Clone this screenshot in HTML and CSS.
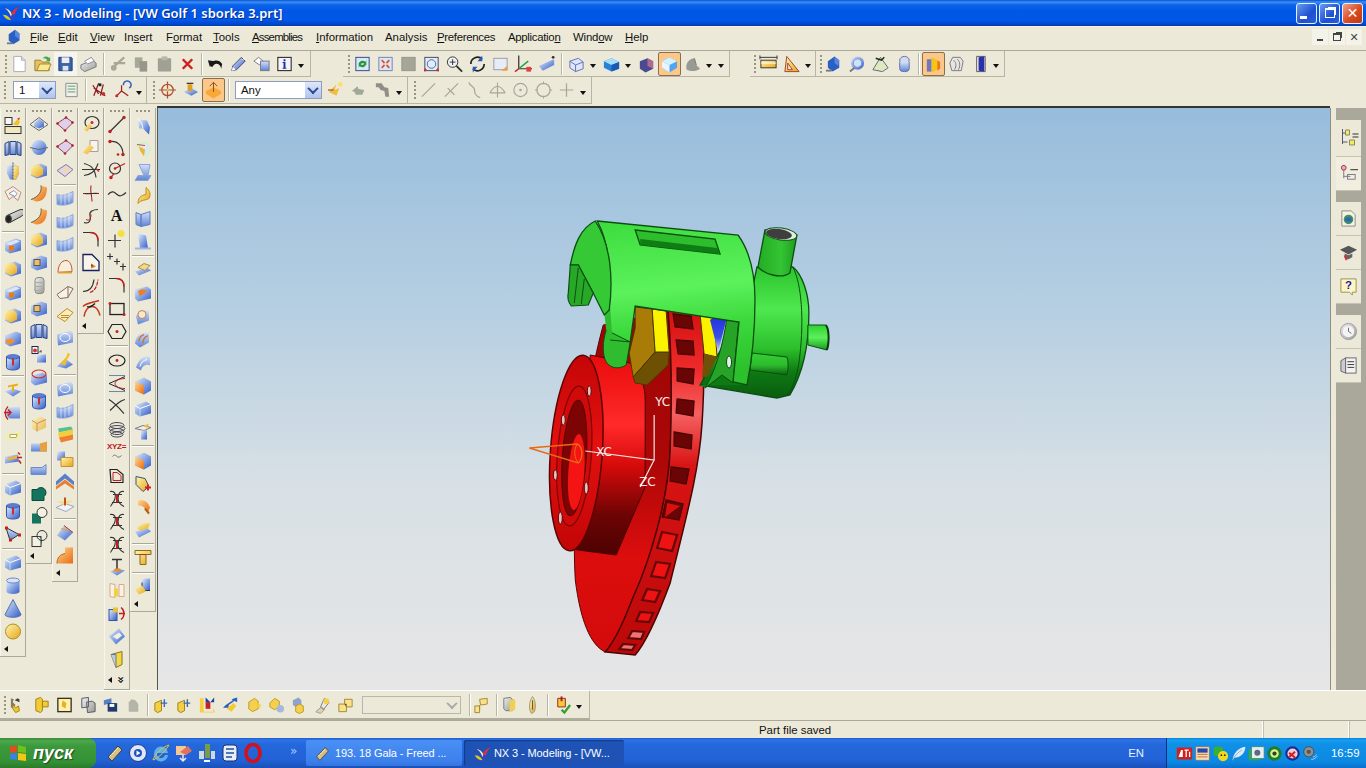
FILE: index.html
```html
<!DOCTYPE html>
<html lang="en">
<head>
<meta charset="utf-8">
<title>NX 3 - Modeling</title>
<link rel="stylesheet" href="styles.css">
</head>
<body>
<svg class="defs" aria-hidden="true">
<defs>
<linearGradient id="gb" x1="0" y1="0" x2="1" y2="1"><stop offset="0" stop-color="#e4eefc"/><stop offset="1" stop-color="#2f5cc8"/></linearGradient>
<linearGradient id="gy" x1="0" y1="0" x2="1" y2="1"><stop offset="0" stop-color="#fff6b0"/><stop offset="1" stop-color="#e8a418"/></linearGradient>
<linearGradient id="go" x1="0" y1="0" x2="1" y2="1"><stop offset="0" stop-color="#ffd890"/><stop offset="1" stop-color="#e86a10"/></linearGradient>
<linearGradient id="gg" x1="0" y1="0" x2="1" y2="1"><stop offset="0" stop-color="#f0f0f0"/><stop offset="1" stop-color="#9a9a92"/></linearGradient>
<linearGradient id="gt" x1="0" y1="0" x2="0" y2="1"><stop offset="0" stop-color="#d5e0f6"/><stop offset="1" stop-color="#5d83d6"/></linearGradient>
<linearGradient id="gbody" x1="0" y1="0" x2="0.1" y2="1"><stop offset="0" stop-color="#3cdc3c"/><stop offset=".45" stop-color="#5cf25c"/><stop offset=".7" stop-color="#3bd83b"/><stop offset="1" stop-color="#2cc02c"/></linearGradient>
<linearGradient id="grear" x1="0" y1="0" x2="0" y2="1"><stop offset="0" stop-color="#2cc42c"/><stop offset=".32" stop-color="#4fe84f"/><stop offset=".62" stop-color="#2cc02c"/><stop offset=".8" stop-color="#0e7a12"/><stop offset="1" stop-color="#0a5c10"/></linearGradient>
<linearGradient id="gbump" x1="0" y1="0" x2="0" y2="1"><stop offset="0" stop-color="#35d035"/><stop offset=".55" stop-color="#2dbb2d"/><stop offset="1" stop-color="#0b5f10"/></linearGradient>
<linearGradient id="gtube" x1="0" y1="0" x2="1" y2="0"><stop offset="0" stop-color="#24ac24"/><stop offset=".6" stop-color="#33c433"/><stop offset="1" stop-color="#1f9c1f"/></linearGradient>
<linearGradient id="gstem" x1="0" y1="0" x2="0" y2="1"><stop offset="0" stop-color="#2fd02f"/><stop offset=".5" stop-color="#5cf05c"/><stop offset="1" stop-color="#169a1c"/></linearGradient>
<linearGradient id="grim" x1="0" y1="0" x2="0" y2="1"><stop offset="0" stop-color="#d41010"/><stop offset=".17" stop-color="#ee2a2a"/><stop offset=".3" stop-color="#f56060"/><stop offset=".45" stop-color="#d81414"/><stop offset="1" stop-color="#bb0808"/></linearGradient>
<linearGradient id="gface" x1="0" y1="0" x2="0" y2="1"><stop offset="0" stop-color="#9c0505"/><stop offset=".45" stop-color="#ad0707"/><stop offset=".72" stop-color="#dc0d0d"/><stop offset="1" stop-color="#d40b0b"/></linearGradient>
<linearGradient id="ghub" x1="0" y1="0" x2="0" y2="1"><stop offset="0" stop-color="#e90b0b"/><stop offset=".35" stop-color="#ff2a2a"/><stop offset=".55" stop-color="#d80a0a"/><stop offset=".8" stop-color="#6d0404"/><stop offset="1" stop-color="#4d0202"/></linearGradient>
<linearGradient id="gflange" x1="0" y1="0" x2="0" y2="1"><stop offset="0" stop-color="#c40606"/><stop offset=".45" stop-color="#e41010"/><stop offset="1" stop-color="#c20606"/></linearGradient>
<linearGradient id="gpad" x1="0" y1="0" x2="0" y2="1"><stop offset="0" stop-color="#2230e0"/><stop offset=".6" stop-color="#3a50e8"/><stop offset="1" stop-color="#d8e0f0"/></linearGradient>
<symbol id="sk" viewBox="0 0 20 20"><rect x="2" y="2" width="7" height="7" fill="#f8f8f4" stroke="#333"/><rect x="2" y="11" width="16" height="7" fill="#efe8c0" stroke="#333"/><path d="M10 9l4-5 3 2-2 4z" fill="#f2c020"/><path d="M14 3l3-1-1 3z" fill="#d84020"/></symbol>
<symbol id="bk" viewBox="0 0 20 20"><path d="M2 5l4-2v13l-4 1zM7 3h6v13H7zM14 3l4 2v12l-4-1z" fill="url(#gt)" stroke="#2a3f80"/></symbol>
<symbol id="rv" viewBox="0 0 20 20"><path d="M4 5l6-2 6 2v7l-3 6H7L4 12z" fill="url(#gb)"/><path d="M10 4l6 1v7l-3 6h-3z" fill="url(#gy)"/><path d="M10 1v17" stroke="#555" stroke-dasharray="2 1"/></symbol>
<symbol id="sw" viewBox="0 0 20 20"><path d="M2 7l8-5 8 6-3 8-5-4-4 3z" fill="#f6efe0" stroke="#c08a80"/><path d="M6 9l5-3 3 3-2 3z" fill="#fff" stroke="#8090c0"/></symbol>
<symbol id="tb" viewBox="0 0 20 20"><path d="M4 8l11-5a3 5 60 0 1 3 6L7 15z" fill="url(#gg)" stroke="#333"/><ellipse cx="5.5" cy="11.5" rx="3" ry="4" fill="#222" stroke="#555"/></symbol>
<symbol id="bo" viewBox="0 0 20 20"><path d="M2 7l11-4 5 2v10l-11 3-5-3z" fill="url(#gb)"/><path d="M3 8l10-4 4 2-10 4z" fill="#d8e6fb"/><path d="M6 10h5v5H6z" fill="#e87c18"/></symbol>
<symbol id="by" viewBox="0 0 20 20"><path d="M2 6l10-3 6 3v9l-10 3-6-3z" fill="url(#gb)"/><path d="M2 6l8-2 4 4v6l-6 3-6-3z" fill="url(#gy)"/></symbol>
<symbol id="bp" viewBox="0 0 20 20"><path d="M2 7l11-4 5 2v10l-11 3-5-3z" fill="url(#gb)"/><path d="M3 11l6-1 3 3-5 3-4-2z" fill="#f09030"/></symbol>
<symbol id="cy" viewBox="0 0 20 20"><ellipse cx="10" cy="5" rx="6.5" ry="2.5" fill="#5b7dd2"/><path d="M3.500 5v11a6.500 2.500 0 0 0 13 0V5a6.500 2.500 0 0 1-13 0" fill="url(#gb)" stroke="#35a"/><path d="M9 7h2v7H9z" fill="#c83030"/></symbol>
<symbol id="ty" viewBox="0 0 20 20"><path d="M2 12l8-3 8 3-8 5z" fill="url(#gb)"/><path d="M5 6l10-2v2l-4 1v5H9V7L5 8z" fill="#e8b020"/></symbol>
<symbol id="ar" viewBox="0 0 20 20"><path d="M7 5l10-1v12H7a6 6 0 0 1 0-11" fill="url(#gt)"/><path d="M5 4a9 9 0 0 0 0 13M1 10h7M5 7l3 3-3 3" fill="none" stroke="#c82020" stroke-width="1.300"/></symbol>
<symbol id="py" viewBox="0 0 20 20"><path d="M2 14l3-6 13-2-2 8z" fill="#f4eea0"/><path d="M7 9h7l-1 3H7z" fill="#fff" stroke="#b0a860"/></symbol>
<symbol id="bar" viewBox="0 0 20 20"><path d="M2 7l13-2 1 7-14 2z" fill="url(#gb)"/><path d="M5 8l9-2v3l-9 2z" fill="#eab040"/><path d="M15 3l2 2M16 11l2 3M14 8h5" stroke="#c02020" stroke-width="1.500"/></symbol>
<symbol id="cu" viewBox="0 0 20 20"><path d="M2 7l11-4 5 3v9l-11 3-5-3z" fill="url(#gb)"/><path d="M2 7l5 3 11-4" stroke="#fff" fill="none"/><path d="M7 10v8" stroke="#bdd"/></symbol>
<symbol id="cyl" viewBox="0 0 20 20"><path d="M3.500 5v11a6.500 2.500 0 0 0 13 0V5z" fill="url(#gb)"/><ellipse cx="10" cy="5" rx="6.500" ry="2.500" fill="#d9e4fa" stroke="#6a86c8"/></symbol>
<symbol id="pt" viewBox="0 0 20 20"><path d="M3 4l13 7-9 6z" fill="url(#gt)" stroke="#333"/><g fill="#c02020"><rect x="2" y="3" width="3" height="3"/><rect x="15" y="10" width="3" height="3"/><rect x="6" y="15" width="3" height="3"/></g></symbol>
<symbol id="cn" viewBox="0 0 20 20"><path d="M10 1l8 15a8 2.800 0 0 1-16 0z" fill="url(#gb)" stroke="#5570b0"/></symbol>
<symbol id="sp" viewBox="0 0 20 20"><circle cx="10" cy="10" r="7.500" fill="url(#gy)" stroke="#a89020"/></symbol>
<symbol id="eb" viewBox="0 0 20 20"><path d="M1 10l9-7 9 7-9 6z" fill="#f3efe4" stroke="#666"/><path d="M5 9l5-5 5 4v4l-5 2-5-2z" fill="url(#gb)"/></symbol>
<symbol id="gl" viewBox="0 0 20 20"><circle cx="10" cy="10" r="7.500" fill="url(#gb)"/><path d="M1 10l9 2 9-2" stroke="#667" fill="none"/></symbol>
<symbol id="yf" viewBox="0 0 20 20"><path d="M12 2c1 6-2 11-10 14l5 2c8 0 11-6 11-14z" fill="url(#go)"/><path d="M12 2c1 6-2 11-10 14" fill="none" stroke="#6a6040"/></symbol>
<symbol id="bw" viewBox="0 0 20 20"><path d="M2 7l10-4 6 2v10l-10 3-6-3z" fill="url(#gb)"/><rect x="5" y="7" width="6" height="6" fill="#e8c070" stroke="#654"/></symbol>
<symbol id="gc" viewBox="0 0 20 20"><rect x="6" y="2" width="9" height="16" rx="3" fill="url(#gg)" stroke="#888"/><path d="M6 7h9M6 11h9M6 15h9" stroke="#aaa"/></symbol>
<symbol id="mx" viewBox="0 0 20 20"><rect x="3" y="2" width="6" height="7" fill="#fff" stroke="#224"/><circle cx="6" cy="6" r="2" fill="#d33"/><path d="M8 10h9v8H8z" fill="url(#gb)"/><path d="M10 8l2-2v2" stroke="#333" fill="none"/></symbol>
<symbol id="rb" viewBox="0 0 20 20"><path d="M2 8l12-3 4 3v7l-12 3-4-3z" fill="url(#gb)"/><ellipse cx="10" cy="6.500" rx="7" ry="4" fill="none" stroke="#d03030" stroke-width="1.200"/></symbol>
<symbol id="ob" viewBox="0 0 20 20"><path d="M3 7l9-4 5 3v8l-9 4-5-3z" fill="url(#gy)" opacity=".7"/><path d="M3 7l5 3v8M8 10l9-4" fill="none" stroke="#c89060"/></symbol>
<symbol id="bl" viewBox="0 0 20 20"><path d="M2 7h12l4-2v10H2z" fill="url(#gt)"/><path d="M11 7l7-2v10h-7z" fill="#e8a040"/></symbol>
<symbol id="fl2" viewBox="0 0 20 20"><path d="M2 8h11l4-3v10H2z" fill="url(#gt)" stroke="#6b8cc8"/></symbol>
<symbol id="t1" viewBox="0 0 20 20"><path d="M3 7h5a5 5 0 1 1 7 7v4H3z" fill="#14745f" stroke="#0a4a3c"/></symbol>
<symbol id="t2" viewBox="0 0 20 20"><rect x="3" y="8" width="9" height="10" fill="#14745f"/><circle cx="13" cy="7" r="5" fill="#f4f0e4" stroke="#333"/></symbol>
<symbol id="t3" viewBox="0 0 20 20"><rect x="3" y="8" width="9" height="10" fill="#f4f0e4" stroke="#333"/><path d="M8 8a5 5 0 0 1 4 8V8z" fill="#14745f"/><circle cx="13" cy="7" r="5" fill="none" stroke="#333"/></symbol>
<symbol id="pr" viewBox="0 0 20 20"><path d="M2 9l9-6 7 5-8 8z" fill="#e0cfe8" stroke="#8a4a5a"/><g fill="#b02038"><circle cx="2.500" cy="9" r="1.300"/><circle cx="11" cy="3" r="1.300"/><circle cx="17.500" cy="8" r="1.300"/><circle cx="10" cy="16" r="1.300"/></g></symbol>
<symbol id="pl" viewBox="0 0 20 20"><path d="M2 10l9-6 7 5-8 7z" fill="#ded7e8" stroke="#8a7890"/><path d="M7 10l4-3 3 2-4 3z" fill="#f8d8a0"/></symbol>
<symbol id="cs" viewBox="0 0 20 20"><path d="M2 6c5 2 10 0 16-3v11c-6 3-11 3-16 2z" fill="url(#gt)" stroke="#8aa3d8"/><path d="M6 6v10M10 5v11M14 4v10" stroke="#fff" opacity=".55"/></symbol>
<symbol id="rs" viewBox="0 0 20 20"><path d="M3 15c0-8 4-12 8-12s6 5 6 11z" fill="#f7efdb" stroke="#c05030"/><path d="M3 15h14" stroke="#e0a030" stroke-width="2"/></symbol>
<symbol id="pk" viewBox="0 0 20 20"><path d="M2 13l11-8 5 2-5 9-8 1z" fill="#f6f2e4" stroke="#866"/><path d="M13 5v11" stroke="#866"/></symbol>
<symbol id="oy" viewBox="0 0 20 20"><path d="M2 12l10-8 6 4-8 9z" fill="#fbeeb6" stroke="#c08830"/><path d="M6 11h8M6 13h7" stroke="#c08830"/></symbol>
<symbol id="cc2" viewBox="0 0 20 20"><path d="M2 7l14-4 2 3v9l-15 3z" fill="url(#gt)"/><ellipse cx="10" cy="10" rx="5" ry="4" fill="none" stroke="#fff"/></symbol>
<symbol id="yb" viewBox="0 0 20 20"><path d="M2 16l8-8 8 6-7 4z" fill="url(#gb)"/><path d="M5 13l6-6 2-5 2 2-3 5-2 6z" fill="#f0c020"/></symbol>
<symbol id="st" viewBox="0 0 20 20"><path d="M3 4l13-2 2 3-14 3z" fill="#58c090"/><path d="M3 8l15-3v5L4 13z" fill="#f0d040"/><path d="M4 13l14-3v5l-12 3z" fill="#f08030"/></symbol>
<symbol id="b2" viewBox="0 0 20 20"><path d="M2 3h8v9H2z" fill="url(#gb)"/><path d="M6 9h12v9H6z" fill="url(#gy)" stroke="#c89030"/></symbol>
<symbol id="ch" viewBox="0 0 20 20"><path d="M1 10l9-8 9 8v4l-9-7-9 7z" fill="#5a80c8"/><path d="M1 15l9-7 9 7v3l-9-6-9 6z" fill="#e88030"/></symbol>
<symbol id="py2" viewBox="0 0 20 20"><path d="M1 13l9-4 9 3-8 5z" fill="#f2f0f8" stroke="#9ab"/><path d="M2 7l16-1-8 5z" fill="#f6dc88"/><path d="M10 3v8" stroke="#c05020" stroke-width="2"/></symbol>
<symbol id="cb" viewBox="0 0 20 20"><path d="M2 13l7-10 9 7-8 8z" fill="url(#gb)"/><path d="M9 3l9 7" stroke="#c03030"/><path d="M6 6l8 2" stroke="#e8a030"/></symbol>
<symbol id="of" viewBox="0 0 20 20"><path d="M10 2h8v16H2c0-6 3-9 8-10z" fill="url(#go)"/><path d="M2 18c0-6 3-9 8-10" fill="none" stroke="#a87020"/></symbol>
<symbol id="sy" viewBox="0 0 20 20"><ellipse cx="11" cy="8" rx="7" ry="6" fill="none" stroke="#333" stroke-width="1.200"/><path d="M3 15l5-6 3 3-5 5z" fill="url(#gy)"/><circle cx="11" cy="8" r="1.500" fill="#c03030"/></symbol>
<symbol id="sy2" viewBox="0 0 20 20"><path d="M9 3h8v11H9z" fill="#f8f4ec" stroke="#a99"/><path d="M2 15l6-8 5 3-7 7z" fill="url(#gy)"/></symbol>
<symbol id="tr" viewBox="0 0 20 20"><path d="M1 9h18M3 3c8 2 11 6 12 14M3 15c6-1 11-3 14-12" fill="none" stroke="#333" stroke-width="1.100"/><path d="M15 8l3 3" stroke="#c03030" stroke-width="1.400"/></symbol>
<symbol id="cr" viewBox="0 0 20 20"><path d="M2 10c6 1 12-1 16 0M10 2c-1 6 1 11 1 16" fill="none" stroke="#a01010"/><path d="M4 10h12" stroke="#333"/></symbol>
<symbol id="cv" viewBox="0 0 20 20"><path d="M3 16c6 2 7-3 6-7s3-6 8-6" fill="none" stroke="#333" stroke-width="1.200"/><path d="M5 13c4 2 5-2 5-5" fill="none" stroke="#c02020"/></symbol>
<symbol id="fl" viewBox="0 0 20 20"><path d="M2 3h8c4 0 7 3 7 8v6" fill="none" stroke="#333" stroke-width="1.200"/><path d="M9 3c5 0 8 3 8 8" fill="none" stroke="#c02020" stroke-width="1.500"/></symbol>
<symbol id="hd" viewBox="0 0 20 20"><path d="M2 2h9l7 7v9H2z" fill="#f7f4ea" stroke="#1a2060" stroke-width="1.300"/><path d="M10 11l5 3-5 2z" fill="#d88030"/><circle cx="11" cy="13" r="1" fill="#c02020"/></symbol>
<symbol id="c2" viewBox="0 0 20 20"><path d="M2 16c7 0 10-4 11-12" fill="none" stroke="#333" stroke-width="1.200"/><path d="M9 17c5-2 7-6 8-13" fill="none" stroke="#c02020" stroke-width="1.200" stroke-dasharray="4 1"/></symbol>
<symbol id="rc" viewBox="0 0 20 20"><path d="M2 8c4-4 10-4 16-6M3 18c1-5 3-10 8-10s7 5 8 9" fill="none" stroke="#c83418" stroke-width="1.500"/><path d="M6 8c2 1 4 1 8-3" fill="none" stroke="#222" stroke-width="1.300"/></symbol>
<symbol id="ln" viewBox="0 0 20 20"><path d="M3 17L17 3" stroke="#333" stroke-width="1.200"/><circle cx="3" cy="17" r="1.700" fill="#c02020"/><circle cx="17" cy="3" r="1.700" fill="#c02020"/></symbol>
<symbol id="ac" viewBox="0 0 20 20"><path d="M3 4c8-1 13 5 13 13" fill="none" stroke="#333" stroke-width="1.200"/><circle cx="3" cy="4" r="1.700" fill="#c02020"/><circle cx="16" cy="17" r="1.700" fill="#c02020"/><circle cx="11" cy="17" r="1.300" fill="#c02020"/></symbol>
<symbol id="ci" viewBox="0 0 20 20"><circle cx="8" cy="8" r="5.500" fill="none" stroke="#333" stroke-width="1.200"/><path d="M8 8l10-5M3 18l4-5" stroke="#c02020" stroke-width="1.200"/><circle cx="8" cy="8" r="1.300" fill="#c02020"/><circle cx="4" cy="17" r="1.700" fill="#c02020"/></symbol>
<symbol id="wv" viewBox="0 0 20 20"><path d="M1 11c4-5 7-2 9 0s5 2 9-2" fill="none" stroke="#333" stroke-width="1.200"/></symbol>
<symbol id="pp" viewBox="0 0 20 20"><path d="M8 5v13M1 11h13" stroke="#333" stroke-width="1.200"/><circle cx="14" cy="4" r="3.500" fill="#f4e040"/></symbol>
<symbol id="ps" viewBox="0 0 20 20"><path d="M3 1v6M0 4h6M10 6v6M7 9h6M16 11v7M13 14h6" stroke="#333" stroke-width="1.200"/></symbol>
<symbol id="sq" viewBox="0 0 20 20"><rect x="3" y="5" width="14" height="11" fill="none" stroke="#222" stroke-width="1.300"/><circle cx="3" cy="5" r="1.500" fill="#c02020"/><circle cx="17" cy="16" r="1.500" fill="#c02020"/></symbol>
<symbol id="hx" viewBox="0 0 20 20"><path d="M5 3h10l4 7-4 7H5l-4-7z" fill="none" stroke="#222" stroke-width="1.200"/><circle cx="10" cy="10" r="1.500" fill="#c02020"/></symbol>
<symbol id="el" viewBox="0 0 20 20"><ellipse cx="10" cy="10" rx="8" ry="5.500" fill="none" stroke="#222" stroke-width="1.200"/><circle cx="10" cy="10" r="1.400" fill="#c02020"/></symbol>
<symbol id="cn2" viewBox="0 0 20 20"><path d="M2 2h16M2 18h16" stroke="#68a"/><path d="M18 3L2 10l16 7" fill="none" stroke="#223"/><path d="M18 5c-7 0-10 3-10 5s3 5 10 5" fill="none" stroke="#c02020"/></symbol>
<symbol id="xc" viewBox="0 0 20 20"><path d="M2 3c5 3 8 6 15 14M18 3c-5 1-9 5-15 11" fill="none" stroke="#333" stroke-width="1.200"/></symbol>
<symbol id="hl" viewBox="0 0 20 20"><g fill="none" stroke="#445"><ellipse cx="10" cy="6" rx="7" ry="3"/><ellipse cx="10" cy="9" rx="8" ry="3"/><ellipse cx="10" cy="12" rx="7" ry="3"/><ellipse cx="10" cy="15" rx="6" ry="2.500"/></g></symbol>
<symbol id="of2" viewBox="0 0 20 20"><path d="M3 4h7l6 5v8H4z" fill="none" stroke="#222" stroke-width="1.200"/><path d="M6 7h4l4 3v5H6z" fill="none" stroke="#c02020"/></symbol>
<symbol id="cc" viewBox="0 0 20 20"><path d="M3 3c5-1 6 3 5 7s-5 7-4 8M17 3c-4-1-6 2-6 7s4 7 6 8M6 6h9M5 14h10" fill="none" stroke="#333" stroke-width="1.200"/><path d="M10 6v8" stroke="#c02020" stroke-width="2"/></symbol>
<symbol id="ts" viewBox="0 0 20 20"><path d="M3 14l7-3 8 2-8 5z" fill="url(#gb)"/><path d="M5 2h10M10 2v10" stroke="#333" stroke-width="1.500"/><path d="M8 11h5l2 3H6z" fill="#e09030"/></symbol>
<symbol id="fy" viewBox="0 0 20 20"><path d="M3 3l5 1v13l-5-1zM12 4h5v12h-5z" fill="#fbf4de" stroke="#d8a890"/><path d="M7 8h4v8H7z" fill="#f4d040"/></symbol>
<symbol id="br" viewBox="0 0 20 20"><rect x="2" y="6" width="8" height="11" fill="url(#gb)" stroke="#35a"/><path d="M6 4h5v5H6z" fill="#e8c040"/><path d="M14 4c4 3 4 9 0 12M12 10h6" fill="none" stroke="#c02020" stroke-width="1.400"/></symbol>
<symbol id="dg" viewBox="0 0 20 20"><path d="M2 10l10-8 6 8-9 8z" fill="url(#gb)"/><path d="M6 10l6-4 3 3-5 4z" fill="#f4f0e0"/></symbol>
<symbol id="yd" viewBox="0 0 20 20"><path d="M4 5l11-3v13l-6 3z" fill="#f4d840" stroke="#8a7020"/><path d="M4 5h5v13" fill="#bcd" stroke="#679"/></symbol>
<symbol id="f1" viewBox="0 0 20 20"><path d="M5 3l9 1 3 7-1 7-6-6H6z" fill="url(#gb)"/><path d="M5 3c3 1 4 4 5 9" stroke="#fff" fill="none"/></symbol>
<symbol id="f2" viewBox="0 0 20 20"><path d="M3 6l10-3 5 6-4 8-6-7z" fill="#dfe6f4" stroke="#bfa"/><path d="M6 7l6 3-1 7-4-6z" fill="#eab830"/><path d="M4 5l8 1" stroke="#c05030"/></symbol>
<symbol id="f3" viewBox="0 0 20 20"><path d="M6 2h11l-2 11h3l-3 5H2l3-5h6z" fill="url(#gt)" stroke="#8aa4d8"/></symbol>
<symbol id="f4" viewBox="0 0 20 20"><path d="M13 2c4 3 5 7 3 11-3 2-8 1-11 5 0-5 2-8 8-9z" fill="url(#gy)" stroke="#b89020"/></symbol>
<symbol id="f5" viewBox="0 0 20 20"><path d="M3 4l5 2v12l-5-2zM8 6l9-3v13l-9 2z" fill="url(#gt)" stroke="#5f7fc0"/></symbol>
<symbol id="f6" viewBox="0 0 20 20"><path d="M5 2l8 2 2 13H7z" fill="url(#gb)"/><path d="M2 16h16v2H2z" fill="#9fb6e4"/></symbol>
<symbol id="s1" viewBox="0 0 20 20"><path d="M2 12l12-4 4 3-12 5z" fill="url(#gb)"/><path d="M5 8l6-4 6 2-5 5z" fill="#f0d890" stroke="#b08a40"/></symbol>
<symbol id="s2" viewBox="0 0 20 20"><path d="M2 6l12-3 4 3v9l-13 3-3-3z" fill="url(#gb)"/><path d="M5 8c3-3 7-3 9 0l-7 5z" fill="#e88030"/></symbol>
<symbol id="s3" viewBox="0 0 20 20"><path d="M3 10c3-7 10-7 13-5v9L5 18z" fill="url(#gt)"/><circle cx="9" cy="8" r="4" fill="#f8e8d0" stroke="#c08050"/></symbol>
<symbol id="s4" viewBox="0 0 20 20"><path d="M2 14c1-8 5-11 14-11v10l-9 5z" fill="url(#gt)"/><path d="M6 12c0-3 2-6 5-7M10 14c0-4 2-7 5-8" fill="none" stroke="#d07030" stroke-width="1.300"/></symbol>
<symbol id="s5" viewBox="0 0 20 20"><path d="M3 15c3-10 9-12 14-11v9c-3-2-8 0-9 5z" fill="url(#gt)"/><path d="M7 14c1-4 3-6 7-7" stroke="#fff" fill="none"/></symbol>
<symbol id="s6" viewBox="0 0 20 20"><path d="M2 6l9-4 7 4v9l-7 4-9-4z" fill="url(#gb)"/><path d="M2 6l9 4v9l-9-4z" fill="url(#go)"/></symbol>
<symbol id="s7" viewBox="0 0 20 20"><path d="M2 7l8-3 8 2-7 3z" fill="#f4f0e0" stroke="#778"/><path d="M8 9h6v9H8z" fill="url(#gb)"/><path d="M11 4l5-2-2 5z" fill="#e8c040"/></symbol>
<symbol id="s9" viewBox="0 0 20 20"><path d="M3 3l9 2 4 8-6 5-7-7z" fill="url(#gy)" stroke="#357"/><path d="M12 14h6M15 11v6" stroke="#d02020" stroke-width="2"/></symbol>
<symbol id="s10" viewBox="0 0 20 20"><path d="M5 4c5-2 10 1 12 7l-2 5-3-3c-1-3-3-4-7-4z" fill="url(#go)"/><path d="M12 12l4 5" stroke="#b05a10" stroke-width="2"/></symbol>
<symbol id="s11" viewBox="0 0 20 20"><path d="M2 12l13-3 3 3-12 6z" fill="url(#gb)"/><path d="M4 9c3-5 8-6 13-5l-2 5-8 2z" fill="url(#gy)"/></symbol>
<symbol id="s12" viewBox="0 0 20 20"><path d="M2 3h16v4h-5v10H7V7H2z" fill="url(#gy)" stroke="#8a6a20"/><path d="M7 7h6" stroke="#b03020"/></symbol>
<symbol id="s13" viewBox="0 0 20 20"><path d="M9 2h8v12H9z" fill="url(#gb)"/><path d="M9 6v8l8 0" fill="none" stroke="#333"/><path d="M2 13l7-4 4 6-7 3z" fill="url(#gy)"/></symbol>
<symbol id="new" viewBox="0 0 20 20"><path d="M4 2h8l4 4v12H4z" fill="#fff" stroke="#a8aab8"/><path d="M12 2v4h4" fill="#dde" stroke="#a8aab8"/></symbol>
<symbol id="open" viewBox="0 0 20 20"><path d="M2 6h6l2 2h7v9H2z" fill="#e8c060" stroke="#97802c"/><path d="M4 17l3-7h12l-3 7z" fill="#fbe890" stroke="#a08a30"/><path d="M10 4c3-3 6-2 7 0l1-2v5h-5l2-1c-1-2-3-2-5-2" fill="#46a64a"/></symbol>
<symbol id="save" viewBox="0 0 20 20"><path d="M3 3h13l1 1v13H3z" fill="#3a63a8" stroke="#20407a"/><rect x="6" y="3" width="8" height="6" fill="#eee"/><rect x="7" y="12" width="6" height="5" fill="#dfe4ee"/></symbol>
<symbol id="print" viewBox="0 0 20 20"><path d="M2 11l12-5 4 3v4l-12 5-4-3z" fill="url(#gg)" stroke="#778"/><path d="M6 7l7-4 3 4-7 3z" fill="#fff" stroke="#889"/></symbol>
<symbol id="cut" viewBox="0 0 20 20"><path d="M16 3L6 12M17 9L5 9" stroke="#a8a898" stroke-width="2.400"/><circle cx="5" cy="14" r="3" fill="#a8a898"/></symbol>
<symbol id="copy" viewBox="0 0 20 20"><path d="M3 3h8v11H3z" fill="#a8a898"/><path d="M8 7h8v11H8z" fill="#96968a"/></symbol>
<symbol id="paste" viewBox="0 0 20 20"><rect x="3" y="4" width="14" height="14" rx="1" fill="#a0a094"/><rect x="7" y="2" width="6" height="4" fill="#b8b8aa"/></symbol>
<symbol id="del" viewBox="0 0 20 20"><path d="M5 5l10 10M15 5L5 15" stroke="#d01f1f" stroke-width="2.600"/></symbol>
<symbol id="undo" viewBox="0 0 20 20"><path d="M5 13c-2-6 8-10 12-3l-1 5c-1-6-7-7-9-2" fill="#181818"/><path d="M2 6l7 1-5 6z" fill="#181818"/></symbol>
<symbol id="pen" viewBox="0 0 20 20"><path d="M3 17l1-5L13 3l4 4-9 9z" fill="url(#gb)" stroke="#446"/><path d="M14 6l3-3" stroke="#fff"/><path d="M3 17l1-4 3 3z" fill="#fff"/></symbol>
<symbol id="tag" viewBox="0 0 20 20"><path d="M2 7l5-4 5 4-4 4z" fill="#fff" stroke="#778"/><rect x="9" y="7" width="9" height="10" fill="url(#gt)" stroke="#778"/></symbol>
<symbol id="info" viewBox="0 0 20 20"><rect x="3" y="3" width="14" height="14" fill="#f3f4fb" stroke="#111"/><path d="M9 5h2v2H9zM8 8h3v6h1v1H8v-1h1V9H8z" fill="#1a2ca0"/></symbol>
<symbol id="grp" viewBox="0 0 20 20"><path d="M3 5l6 9M9 3L4 16M4 8l12 8M14 4l-3 12" stroke="#8a1818" stroke-width="1.300"/><circle cx="14" cy="14" r="2" fill="#c03030"/><rect x="9" y="3" width="3" height="3" fill="#222"/></symbol>
<symbol id="rot" viewBox="0 0 20 20"><path d="M3 17l6-6 0-6M9 11l7 5" fill="none" stroke="#a02020" stroke-width="1.300"/><circle cx="4" cy="16" r="1.600" fill="#c03030"/><path d="M11 5a4 4 0 1 1 6 3" fill="none" stroke="#3060c0" stroke-width="1.500"/></symbol>
<symbol id="stack" viewBox="0 0 20 20"><path d="M4 3h12v14H4z" fill="#f0f0e6" stroke="#889"/><path d="M6 6h8M6 9h8M6 12h8" stroke="#5a9a70"/></symbol>
<symbol id="tg" viewBox="0 0 20 20"><circle cx="10" cy="10" r="6" fill="none" stroke="#b05030" stroke-width="1.400"/><path d="M10 1v18M1 10h18" stroke="#b05030" stroke-width="1.300"/><circle cx="10" cy="10" r="1.500" fill="#e0c040"/></symbol>
<symbol id="cube2" viewBox="0 0 20 20"><path d="M3 12l8-4 7 4-7 4z" fill="url(#gb)"/><path d="M7 4h5v7H7z" fill="#e0a020"/><path d="M6 3h7" stroke="#333" stroke-width="1.300"/></symbol>
<symbol id="cube3" viewBox="0 0 20 20"><path d="M2 11l8-4 8 4v3l-8 5-8-5z" fill="#f7a836"/><path d="M10 2v10M6 6l4-4 4 4" fill="none" stroke="#8a4a10"/></symbol>
<symbol id="y1" viewBox="0 0 20 20"><path d="M2 12l8-8-2 6 5-2-3 8z" fill="#ecc040"/><circle cx="14" cy="4" r="2.500" fill="#f8e070"/><path d="M1 10h6" stroke="#b05030" stroke-width="1.300"/></symbol>
<symbol id="gr1" viewBox="0 0 20 20"><path d="M2 11l6-5 1 3 6 1-2 5H6l-1-3z" fill="#a0a898"/></symbol>
<symbol id="gr2" viewBox="0 0 20 20"><path d="M3 3h6l3 4 4 1 1 9h-4l-1-6-4-1-2-3H3z" fill="#908e86"/></symbol>
<symbol id="al" viewBox="0 0 20 20"><path d="M3 17L17 3" stroke="#a8a69a" stroke-width="1.300"/></symbol>
<symbol id="al2" viewBox="0 0 20 20"><path d="M3 17L17 3M6 8l7 7" stroke="#a8a69a" stroke-width="1.300"/></symbol>
<symbol id="al3" viewBox="0 0 20 20"><path d="M4 2c1 4 6 4 6 8 0 4 2 7 6 8" fill="none" stroke="#a8a69a" stroke-width="1.300"/></symbol>
<symbol id="al4" viewBox="0 0 20 20"><path d="M2 13c3-5 6-7 8-7s5 2 8 7M10 2v16M2 13h16" fill="none" stroke="#a8a69a" stroke-width="1.200"/></symbol>
<symbol id="al5" viewBox="0 0 20 20"><circle cx="10" cy="10" r="7" fill="none" stroke="#a8a69a" stroke-width="1.200"/><circle cx="10" cy="10" r="1.400" fill="#a8a69a"/></symbol>
<symbol id="al6" viewBox="0 0 20 20"><circle cx="10" cy="10" r="7" fill="none" stroke="#a8a69a" stroke-width="1.300"/><path d="M10 1v3M10 16v3M1 10h3M16 10h3" stroke="#a8a69a"/></symbol>
<symbol id="al7" viewBox="0 0 20 20"><path d="M10 3v14M3 10h14" stroke="#a8a69a" stroke-width="1.300"/></symbol>
<symbol id="v1" viewBox="0 0 20 20"><rect x="3" y="3" width="14" height="14" fill="#dce6f6" stroke="#2a4a8a"/><path d="M6 11a4 4 0 0 1 7-3l1-2v5h-4l2-1a3 3 0 0 0-5 1zM14 9a4 4 0 0 1-7 3l-1 2V9h4l-2 1a3 3 0 0 0 5-1z" fill="#1e9a3c"/></symbol>
<symbol id="v2" viewBox="0 0 20 20"><rect x="3" y="3" width="14" height="14" fill="#dce6f6" stroke="#6a84bc"/><path d="M6 6l3 3M14 6l-3 3M6 14l3-3M14 14l-3-3" stroke="#e05020" stroke-width="1.800"/></symbol>
<symbol id="v3" viewBox="0 0 20 20"><rect x="3" y="3" width="14" height="14" fill="#a6a698" stroke="#96968a"/></symbol>
<symbol id="v4" viewBox="0 0 20 20"><rect x="3" y="3" width="14" height="14" fill="#e4ecf8" stroke="#446"/><circle cx="10" cy="10" r="4.500" fill="none" stroke="#3a6ab8"/><path d="M2 18l4-1-3-3zM18 18l-4-1 3-3z" fill="#c03030"/></symbol>
<symbol id="v5" viewBox="0 0 20 20"><circle cx="8" cy="8" r="5.500" fill="#eef0f6" stroke="#333"/><path d="M5 8h6M8 5v6" stroke="#333"/><path d="M12 12l6 6" stroke="#333" stroke-width="2"/></symbol>
<symbol id="v6" viewBox="0 0 20 20"><path d="M3 10a7 7 0 0 1 12-5M17 10a7 7 0 0 1-12 5" fill="none" stroke="#222" stroke-width="1.800"/><path d="M15 1v6h-5zM5 19v-6h5z" fill="#2a5ac0"/></symbol>
<symbol id="v7" viewBox="0 0 20 20"><rect x="3" y="4" width="14" height="12" fill="#e8ecf6" stroke="#99a"/><path d="M11 17l6-5v5z" fill="#e8a040"/></symbol>
<symbol id="v8" viewBox="0 0 20 20"><path d="M5 1v14h14" fill="none" stroke="#333" stroke-width="1.300"/><path d="M5 15l10-8" stroke="#20a040" stroke-width="1.600"/><path d="M1 18l4-3" stroke="#d02020" stroke-width="1.600"/><rect x="13" y="13" width="5" height="5" fill="#e04040"/></symbol>
<symbol id="v9" viewBox="0 0 20 20"><path d="M2 12l11-5 5-2v6l-12 6z" fill="url(#gb)"/><circle cx="17" cy="3" r="1.500" fill="#333"/></symbol>
<symbol id="w1" viewBox="0 0 20 20"><path d="M3 7l9-3 5 4v7l-8 3-6-4z" fill="#dfe5fa" stroke="#6070b8"/><path d="M3 7l6 4v7M9 11l8-3" fill="none" stroke="#6070b8"/></symbol>
<symbol id="w2" viewBox="0 0 20 20"><path d="M2 7l8-3 8 4v7l-8 3-8-4z" fill="#2a82d8"/><path d="M2 7l8-3 8 4-8 3z" fill="#a5e0f8"/><path d="M10 11v7l8-3V8z" fill="#1a5ab0"/></symbol>
<symbol id="w3" viewBox="0 0 20 20"><path d="M3 7l8-3 6 3v8l-8 4-6-4z" fill="#4a4a90"/><path d="M11 4l6 3v8l-6-3z" fill="#b06a90"/></symbol>
<symbol id="w4" viewBox="0 0 20 20"><path d="M2 7l8-4 8 4v7l-8 5-8-5z" fill="#4fa6ee"/><path d="M2 7l8-4 8 4-8 4z" fill="#d8f0fc"/><path d="M2 7l8 4v8l-8-5z" fill="#e9f4fc"/></symbol>
<symbol id="w5" viewBox="0 0 20 20"><path d="M4 16c-2-5 2-12 8-12l2 7 4 4c-4 3-10 3-14 1z" fill="#9a9a94"/><path d="M12 4l2 7" stroke="#777"/></symbol>
<symbol id="m1" viewBox="0 0 20 20"><rect x="2" y="6" width="16" height="8" fill="url(#gy)" stroke="#333"/><path d="M1 3h18M1 1v4M19 1v4" stroke="#333"/><path d="M2 9h16" stroke="#fff"/></symbol>
<symbol id="m2" viewBox="0 0 20 20"><path d="M5 2l13 16H3z" fill="url(#gy)" stroke="#a04030"/><path d="M6 9l5 7H6z" fill="#f3ecd0" stroke="#a04030"/></symbol>
<symbol id="m3" viewBox="0 0 20 20"><path d="M3 7l7-5 5 4v8l-7 4-5-4z" fill="#2a5fc4"/><path d="M10 2l5 4-1 6-4-3z" fill="#5a86dc"/><path d="M1 17h6" stroke="#778" stroke-width="2"/></symbol>
<symbol id="m4" viewBox="0 0 20 20"><circle cx="10" cy="9" r="7" fill="url(#gb)"/><circle cx="10" cy="9" r="4.500" fill="#cfe0f8" stroke="#6a8ed0"/><path d="M2 18l5-4" stroke="#778" stroke-width="2"/></symbol>
<symbol id="m5" viewBox="0 0 20 20"><path d="M2 16L10 3l8 11-6 4z" fill="#dfe8c0" stroke="#567"/><path d="M5 4l6 2 3-3" stroke="#222" stroke-width="1.500" fill="none"/></symbol>
<symbol id="m6" viewBox="0 0 20 20"><ellipse cx="11" cy="6" rx="5" ry="4" fill="#d2daf0" stroke="#6070a8"/><path d="M6 8v7a5 3 0 0 0 10 0V8" fill="url(#gt)" stroke="#6070a8"/></symbol>
<symbol id="d1" viewBox="0 0 20 20"><path d="M3 5h5v13H3z" fill="#6e78c0"/><path d="M8 3l6 3v10l-6 3z" fill="#f6c414"/><path d="M14 6l3 2v7l-3 2z" fill="#e87818"/></symbol>
<symbol id="d2" viewBox="0 0 20 20"><path d="M6 3h8l3 4-2 10H5l-2-8z" fill="#e8e6dc" stroke="#778"/><path d="M7 6c3 3 3 6 1 10M11 5c3 3 3 7 1 11" stroke="#778" fill="none"/></symbol>
<symbol id="d3" viewBox="0 0 20 20"><path d="M7 2h9v16H7z" fill="#f4f0e6" stroke="#555"/><path d="M9 3l6-1v16l-6-1z" fill="#2a2eb0"/></symbol>
<symbol id="b1" viewBox="0 0 20 20"><path d="M2 3l3 1-1 3 3 3-3 3H2z" fill="#8a7a60"/><path d="M6 5l3-2 2 1v3z" fill="#444"/><path d="M4 10l3 3 3-2 1 5-4 2-3-4z" fill="#f0c820" stroke="#a08020"/></symbol>
<symbol id="b3" viewBox="0 0 20 20"><path d="M4 4l5-2 2 2v12l-2 2-5-2z" fill="#f3ca30" stroke="#a08020"/><path d="M11 6h6v6h-6z" fill="#f3ca30" stroke="#a08020"/></symbol>
<symbol id="b4" viewBox="0 0 20 20"><rect x="3" y="3" width="14" height="14" fill="#fff2b0" stroke="#3a3020" stroke-width="1.400"/><path d="M8 5l4 3-1 6-4-3z" fill="#eab020"/></symbol>
<symbol id="b5" viewBox="0 0 20 20"><path d="M4 3l7-1v10l-7 1zM9 7l6-1 3 2v9l-8 1z" fill="url(#gg)" stroke="#556"/></symbol>
<symbol id="b6" viewBox="0 0 20 20"><path d="M3 5l8-2v5l-8 2z" fill="#5580c8"/><rect x="7" y="8" width="10" height="9" fill="#203a70"/><rect x="9" y="9" width="5" height="3" fill="#fff"/></symbol>
<symbol id="b7" viewBox="0 0 20 20"><path d="M5 17V7l3-3 4 1 3 4v8z" fill="#b4b4a8"/></symbol>
<symbol id="b8" viewBox="0 0 20 20"><path d="M3 8l7-3v11l-4 2-3-2z" fill="#f4d040" stroke="#a08020"/><path d="M9 8h7M13 4v8" stroke="#3a6ab8" stroke-width="1.500"/></symbol>
<symbol id="b9" viewBox="0 0 20 20"><path d="M2 3h4v14h10v-4l2 5H2z" fill="#f4d040"/><rect x="8" y="7" width="5" height="7" fill="#c82020"/><path d="M8 2l5 5 4-5v5H8z" fill="#1a3ea8"/></symbol>
<symbol id="b10" viewBox="0 0 20 20"><path d="M2 13l6-5v5zM11 4l6-2v5z" fill="#2a60c0"/><path d="M4 12L15 4" stroke="#2a60c0" stroke-width="1.600"/><path d="M6 14l7-6 3 3-5 6z" fill="#f3ca30"/></symbol>
<symbol id="b11" viewBox="0 0 20 20"><path d="M5 7l6-4 4 3v8l-6 3-4-3z" fill="#f4d050" stroke="#c09a20"/><path d="M15 8l3 2-1 3-3-1z" fill="#f4d050"/></symbol>
<symbol id="b12" viewBox="0 0 20 20"><path d="M3 8l5-5 5 3v6l-5 3-5-3z" fill="#f4d050" stroke="#c09a20"/><circle cx="14" cy="14" r="4" fill="#a6b8de"/></symbol>
<symbol id="b13" viewBox="0 0 20 20"><path d="M3 5l6-3 3 3v5l-5 3-4-3z" fill="#8ea2cf"/><path d="M6 11l4-2 4 2v6l-4 2-4-2z" fill="#f4d050" stroke="#c09a20"/></symbol>
<symbol id="b14" viewBox="0 0 20 20"><path d="M3 17l6-5 3 3-4 4z" fill="#e8d490" stroke="#99a"/><path d="M8 12l4-9 5 4-6 8z" fill="none" stroke="#778"/><circle cx="14" cy="6" r="3" fill="#f4d050"/></symbol>
<symbol id="b15" viewBox="0 0 20 20"><path d="M3 17V9h6V4h8v8h-6v5z" fill="#fbe090" stroke="#a08a30"/><path d="M9 9h2v3" stroke="#a08a30"/></symbol>
<symbol id="b16" viewBox="0 0 20 20"><path d="M8 4l8-1v6l-7 1zM3 11h5v7H3z" fill="#fbe090" stroke="#a08a30"/><path d="M8 10L8 15" stroke="#a08a30"/></symbol>
<symbol id="b17" viewBox="0 0 20 20"><path d="M4 3l7-1 2 2v12H6l-2-2z" fill="url(#gg)" stroke="#778"/><path d="M10 5l6-1v11l-6 2z" fill="#f0d050"/></symbol>
<symbol id="b18" viewBox="0 0 20 20"><path d="M10 1c3 4 4 10 2 16l-3 2c-3-4-3-12 1-18z" fill="url(#gy)" stroke="#998"/><path d="M10 5v10" stroke="#556"/></symbol>
<symbol id="b19" viewBox="0 0 20 20"><path d="M5 3h8v9H5z" fill="#f0cc40" stroke="#a02020"/><path d="M9 1v5" stroke="#a02020" stroke-width="2"/><path d="M9 15l3 3 6-8" fill="none" stroke="#32a030" stroke-width="2.400"/></symbol>
<symbol id="r1" viewBox="0 0 20 20"><path d="M4 1v15M4 5h5M4 14h5" fill="none" stroke="#557"/><path d="M7 2h4v5H7zM11 12h5v5h-5z" fill="#f2ec60" stroke="#886"/><path d="M14 6h6M14 9h6" stroke="#333"/></symbol>
<symbol id="r2" viewBox="0 0 20 20"><path d="M5 1v14M5 13h7" fill="none" stroke="#778"/><circle cx="5" cy="4" r="2.500" fill="#e8b0b8" stroke="#a03040"/><rect x="9" y="11" width="8" height="5" fill="none" stroke="#778"/><path d="M12 6h8" stroke="#222"/></symbol>
<symbol id="r3" viewBox="0 0 20 20"><path d="M3 2h10l4 4v12H3z" fill="#f8f4d8" stroke="#889"/><circle cx="10" cy="11" r="5" fill="#3a9070"/><path d="M7 9h6v4H7z" fill="#3a60b0"/></symbol>
<symbol id="r4" viewBox="0 0 20 20"><path d="M1 7l9-4 9 4-9 5z" fill="#55555a"/><path d="M6 11v5l4 1 4-2v-4l-4 2z" fill="#66666a"/><path d="M8 18l-2-5" stroke="#d83030" stroke-width="2"/></symbol>
<symbol id="r5" viewBox="0 0 20 20"><path d="M2 2h16v14h-4v3l-3-3H2z" fill="#fdf5c4" stroke="#99905a"/><text x="10" y="13" class="q">?</text></symbol>
<symbol id="r6" viewBox="0 0 20 20"><circle cx="10" cy="10" r="8.500" fill="url(#gg)" stroke="#99a"/><circle cx="10" cy="10" r="6" fill="#f4f4f4"/><path d="M10 6v4l3 2" stroke="#667" fill="none"/></symbol>
<symbol id="r7" viewBox="0 0 20 20"><path d="M2 5l5-3v16l-5-2z" fill="#ccc" stroke="#667"/><rect x="7" y="2" width="11" height="16" fill="#f4f4ee" stroke="#667"/><path d="M9 6h7M9 9h7M9 12h7" stroke="#334"/><path d="M9 6h1M9 9h1" stroke="#d04030"/></symbol>
<symbol id="nx" viewBox="0 0 20 20"><path d="M0 3c5 0 9 3 10 8 2-5 5-8 10-9-3 3-5 7-6 15l-4 2C9 12 6 6 0 3z" fill="#3048c8"/><path d="M3 5c3 1 5 4 7 9l1-3C9 7 6 5 3 5z" fill="#f6f0c0"/><path d="M10 11c2-4 5-7 9-8-2 2-4 5-5 9z" fill="#d8343a"/><path d="M1 12c4 0 7 2 9 6-4 0-7-2-9-6z" fill="#e8c020"/></symbol>
<symbol id="flag" viewBox="0 0 20 20"><path d="M2 4l7-2v7l-7 1z" fill="#e74a20"/><path d="M10 2l8 2v6l-8-1z" fill="#6cc21c"/><path d="M2 11l7-1v7l-7-1z" fill="#3a80e6"/><path d="M10 10l8 1v7l-8-1z" fill="#f6c614"/></symbol>
<symbol id="gold" viewBox="0 0 20 20"><path d="M3 14L13 3l4 4L7 18z" fill="#d8c080" stroke="#443"/><path d="M5 13l8-8" stroke="#fff" stroke-dasharray="2 1"/></symbol>
<symbol id="mp" viewBox="0 0 20 20"><circle cx="10" cy="10" r="8.500" fill="#dfe8fa" stroke="#1c3e90"/><circle cx="10" cy="10" r="4" fill="#2050c0"/><path d="M8.500 7.500l4 2.500-4 2.500z" fill="#fff"/></symbol>
<symbol id="ie" viewBox="0 0 20 20"><path d="M3 11a7 7 0 0 1 14-1H6a4 4 0 0 0 8 2h3a7 7 0 0 1-14-1z" fill="#5cb0ec"/><path d="M2 17c2-6 9-13 16-15-3 5-10 13-16 15z" fill="none" stroke="#e8c040"/></symbol>
<symbol id="q4" viewBox="0 0 20 20"><rect x="2" y="3" width="10" height="9" fill="#f4c890"/><path d="M6 9l8-6 4 5-6 4z" fill="#e07060"/><path d="M9 12v6M6 15l3 3 3-3" stroke="#e8e8f0" stroke-width="1.500" fill="none"/></symbol>
<symbol id="q5" viewBox="0 0 20 20"><rect x="8" y="1" width="5" height="14" fill="#7a9c48"/><rect x="2" y="8" width="5" height="8" fill="#d0d8e4"/><rect x="14" y="8" width="4" height="8" fill="#d0d8e4"/><path d="M7 18h6" stroke="#fff" stroke-width="2"/></symbol>
<symbol id="q6" viewBox="0 0 20 20"><rect x="3" y="2" width="14" height="16" rx="3" fill="#e8eef8" stroke="#1c2e70"/><path d="M6 6h8M6 10h8M6 14h6" stroke="#2050a0" stroke-width="1.500"/></symbol>
<symbol id="ops" viewBox="0 0 20 20"><ellipse cx="10" cy="10" rx="7" ry="8.500" fill="none" stroke="#d4101c" stroke-width="3.600"/></symbol>
<symbol id="ati" viewBox="0 0 20 20"><rect x="1" y="3" width="18" height="14" fill="#d41f1f"/><path d="M3 14l3-8h2v8" fill="#fff"/><path d="M10 6h5M12 6v8M16 8v6" stroke="#fff" stroke-width="1.500"/></symbol>
<symbol id="mail" viewBox="0 0 20 20"><rect x="2" y="2" width="16" height="16" fill="#f4e0b0" stroke="#778"/><rect x="4" y="4" width="12" height="5" fill="#2848a8"/><path d="M4 11h12M4 14h12" stroke="#d05030"/></symbol>
<symbol id="sm" viewBox="0 0 20 20"><rect x="2" y="2" width="11" height="11" rx="2" fill="#38b030"/><circle cx="13" cy="13" r="6" fill="#f4d820"/><circle cx="11" cy="12" r="1" fill="#222"/><circle cx="15" cy="12" r="1" fill="#222"/></symbol>
<symbol id="fe" viewBox="0 0 20 20"><path d="M3 18C4 9 10 3 18 2c0 8-6 13-13 13z" fill="#dbeaf8"/><path d="M3 18c3-6 7-10 11-12" stroke="#8ab" fill="none"/></symbol>
<symbol id="gs" viewBox="0 0 20 20"><rect x="1" y="5" width="13" height="13" fill="#34ac38"/><rect x="4" y="2" width="15" height="14" fill="#e8eef0" stroke="#388"/><circle cx="11" cy="9" r="3.500" fill="#5a6a80"/></symbol>
<symbol id="gd" viewBox="0 0 20 20"><circle cx="10" cy="10" r="8.500" fill="#1a8028"/><circle cx="10" cy="10" r="5" fill="#e8e890"/><circle cx="10" cy="10" r="2.500" fill="#1a5020"/></symbol>
<symbol id="av" viewBox="0 0 20 20"><circle cx="10" cy="10" r="8.500" fill="#1a2a90"/><circle cx="10" cy="10" r="6" fill="#e8d0d8"/><path d="M6 9l7 6M13 8l-7 6" stroke="#d81a20" stroke-width="2.400"/></symbol>
<symbol id="sp2" viewBox="0 0 20 20"><circle cx="8" cy="8" r="6" fill="#909090" stroke="#444"/><circle cx="8" cy="8" r="2.500" fill="#555"/><path d="M13 14c2 0 3-1 4-3M11 17c3 0 6-2 7-4" stroke="#b8d0f0" fill="none"/></symbol>
</defs>
</svg>

<div class="window">
  <header class="titlebar">
    <svg class="title-logo"><use href="#nx"/></svg>
    <span class="title-text">NX 3 - Modeling - [VW Golf 1 sborka 3.prt]</span>
    <div class="win-btns">
      <span class="wb"><span class="wb-min"></span></span>
      <span class="wb"><span class="wb-res"></span></span>
      <span class="wb wb-close">✕</span>
    </div>
  </header>

  <nav class="menubar">
    <svg class="menu-logo"><use href="#m3"/></svg>
    <div class="menus">
      <span class="m m1"><u>F</u>ile</span>
      <span class="m m2"><u>E</u>dit</span>
      <span class="m m3"><u>V</u>iew</span>
      <span class="m m4">In<u>s</u>ert</span>
      <span class="m m5">F<u>o</u>rmat</span>
      <span class="m m6"><u>T</u>ools</span>
      <span class="m m7"><u>A</u>ssemblies</span>
      <span class="m m8"><u>I</u>nformation</span>
      <span class="m m9">Analysis</span>
      <span class="m m10"><u>P</u>references</span>
      <span class="m m11">Applicatio<u>n</u></span>
      <span class="m m12">Wind<u>o</u>w</span>
      <span class="m m13"><u>H</u>elp</span>
    </div>
    <div class="mdi-btns"><span class="mdi"><span class="mdi-min"></span></span><span class="mdi"><span class="mdi-res"></span></span><span class="mdi mdi-x">✕</span></div>
  </nav>

  <div class="toolrow">
    <div class="tb t-a">
      <span class="grip"></span>
      <svg class="ti"><use href="#new"/></svg><svg class="ti"><use href="#open"/></svg><svg class="ti ti-soft"><use href="#save"/></svg><svg class="ti"><use href="#print"/></svg>
      <span class="sep"></span>
      <svg class="ti"><use href="#cut"/></svg><svg class="ti"><use href="#copy"/></svg><svg class="ti"><use href="#paste"/></svg><svg class="ti"><use href="#del"/></svg>
      <span class="sep sep-n"></span>
      <svg class="ti"><use href="#undo"/></svg><svg class="ti"><use href="#pen"/></svg><svg class="ti"><use href="#tag"/></svg><svg class="ti"><use href="#info"/></svg>
      <span class="drop"></span>
    </div>
    <div class="tb t-b">
      <span class="grip"></span>
      <svg class="ti"><use href="#v1"/></svg><svg class="ti"><use href="#v2"/></svg><svg class="ti"><use href="#v3"/></svg><svg class="ti"><use href="#v4"/></svg><svg class="ti"><use href="#v5"/></svg><svg class="ti"><use href="#v6"/></svg><svg class="ti"><use href="#v7"/></svg><svg class="ti"><use href="#v8"/></svg><svg class="ti"><use href="#v9"/></svg>
      <span class="sep"></span>
      <svg class="ti"><use href="#w1"/></svg><span class="drop"></span><svg class="ti"><use href="#w2"/></svg><span class="drop"></span><svg class="ti"><use href="#w3"/></svg><svg class="ti ti-on"><use href="#w4"/></svg><svg class="ti"><use href="#w5"/></svg><span class="drop"></span><span class="drop"></span>
    </div>
    <div class="tb t-c">
      <span class="grip"></span>
      <svg class="ti"><use href="#m1"/></svg><svg class="ti"><use href="#m2"/></svg><span class="drop"></span>
    </div>
    <div class="tb t-d">
      <span class="grip"></span>
      <svg class="ti"><use href="#m3"/></svg><svg class="ti"><use href="#m4"/></svg><svg class="ti"><use href="#m5"/></svg><svg class="ti"><use href="#m6"/></svg>
      <span class="sep"></span>
      <svg class="ti ti-on"><use href="#d1"/></svg><svg class="ti"><use href="#d2"/></svg><svg class="ti"><use href="#d3"/></svg><span class="drop"></span>
    </div>
  </div>

  <div class="toolrow toolrow-2">
    <div class="tb t-e">
      <span class="grip"></span>
      <span class="combo combo-1"><span class="combo-text">1</span><span class="combo-arrow"></span></span>
      <svg class="ti"><use href="#stack"/></svg>
      <span class="sep sep-n"></span>
      <svg class="ti"><use href="#grp"/></svg><svg class="ti"><use href="#rot"/></svg><span class="drop"></span>
    </div>
    <div class="tb t-f">
      <span class="grip"></span>
      <svg class="ti"><use href="#tg"/></svg><svg class="ti"><use href="#cube2"/></svg><svg class="ti ti-on"><use href="#cube3"/></svg>
      <span class="sep"></span>
      <span class="combo combo-2"><span class="combo-text">Any</span><span class="combo-arrow"></span></span>
      <svg class="ti"><use href="#y1"/></svg><svg class="ti"><use href="#gr1"/></svg><svg class="ti"><use href="#gr2"/></svg><span class="drop"></span>
    </div>
    <div class="tb t-g">
      <span class="grip"></span>
      <svg class="ti"><use href="#al"/></svg><svg class="ti"><use href="#al2"/></svg><svg class="ti"><use href="#al3"/></svg><svg class="ti"><use href="#al4"/></svg><svg class="ti"><use href="#al5"/></svg><svg class="ti"><use href="#al6"/></svg><svg class="ti"><use href="#al7"/></svg><span class="drop"></span>
    </div>
  </div>

  <main class="workarea">
    <aside class="docks">
      <div class="dock d-1">
        <span class="dgrip"></span>
        <svg class="di"><use href="#sk"/></svg><svg class="di"><use href="#bk"/></svg><svg class="di"><use href="#rv"/></svg><svg class="di"><use href="#sw"/></svg><svg class="di"><use href="#tb"/></svg>
        <span class="dsep"></span>
        <svg class="di"><use href="#bo"/></svg><svg class="di"><use href="#by"/></svg><svg class="di"><use href="#bo"/></svg><svg class="di"><use href="#by"/></svg><svg class="di"><use href="#bp"/></svg><svg class="di"><use href="#cy"/></svg>
        <span class="dsep"></span>
        <svg class="di"><use href="#ty"/></svg><svg class="di"><use href="#ar"/></svg><svg class="di"><use href="#py"/></svg><svg class="di"><use href="#bar"/></svg>
        <span class="dsep"></span>
        <svg class="di"><use href="#cu"/></svg><svg class="di"><use href="#cy"/></svg><svg class="di"><use href="#pt"/></svg>
        <span class="dsep"></span>
        <svg class="di"><use href="#cu"/></svg><svg class="di"><use href="#cyl"/></svg><svg class="di"><use href="#cn"/></svg><svg class="di"><use href="#sp"/></svg>
        <span class="more"></span>
      </div>
      <div class="dock d-2">
        <span class="dgrip"></span>
        <svg class="di"><use href="#eb"/></svg><svg class="di"><use href="#gl"/></svg><svg class="di"><use href="#by"/></svg><svg class="di"><use href="#yf"/></svg><svg class="di"><use href="#yf"/></svg><svg class="di"><use href="#by"/></svg><svg class="di"><use href="#bw"/></svg><svg class="di"><use href="#gc"/></svg><svg class="di"><use href="#bw"/></svg><svg class="di"><use href="#bk"/></svg><svg class="di"><use href="#mx"/></svg><svg class="di"><use href="#rb"/></svg><svg class="di"><use href="#cy"/></svg><svg class="di"><use href="#ob"/></svg><svg class="di"><use href="#bl"/></svg><svg class="di"><use href="#fl2"/></svg><svg class="di"><use href="#t1"/></svg><svg class="di"><use href="#t2"/></svg><svg class="di"><use href="#t3"/></svg>
        <span class="more"></span>
      </div>
      <div class="dock d-3">
        <span class="dgrip"></span>
        <svg class="di"><use href="#pr"/></svg><svg class="di"><use href="#pr"/></svg><svg class="di"><use href="#pl"/></svg>
        <span class="dsep"></span>
        <svg class="di"><use href="#cs"/></svg><svg class="di"><use href="#cs"/></svg><svg class="di"><use href="#cs"/></svg><svg class="di"><use href="#rs"/></svg><svg class="di"><use href="#pk"/></svg><svg class="di"><use href="#oy"/></svg><svg class="di"><use href="#cc2"/></svg><svg class="di"><use href="#yb"/></svg>
        <span class="dsep"></span>
        <svg class="di"><use href="#cc2"/></svg><svg class="di"><use href="#cs"/></svg><svg class="di"><use href="#st"/></svg><svg class="di"><use href="#b2"/></svg><svg class="di"><use href="#ch"/></svg><svg class="di"><use href="#py2"/></svg>
        <span class="dsep"></span>
        <svg class="di"><use href="#cb"/></svg><svg class="di"><use href="#of"/></svg>
        <span class="more"></span>
      </div>
      <div class="dock d-4">
        <span class="dgrip"></span>
        <svg class="di"><use href="#sy"/></svg><svg class="di"><use href="#sy2"/></svg><svg class="di"><use href="#tr"/></svg><svg class="di"><use href="#cr"/></svg><svg class="di"><use href="#cv"/></svg><svg class="di"><use href="#fl"/></svg><svg class="di"><use href="#hd"/></svg><svg class="di"><use href="#c2"/></svg><svg class="di"><use href="#rc"/></svg>
        <span class="more"></span>
      </div>
      <div class="dock d-5">
        <span class="dgrip"></span>
        <svg class="di"><use href="#ln"/></svg><svg class="di"><use href="#ac"/></svg><svg class="di"><use href="#ci"/></svg><svg class="di"><use href="#wv"/></svg><span class="di-text di-a">A</span><svg class="di"><use href="#pp"/></svg><svg class="di"><use href="#ps"/></svg><svg class="di"><use href="#fl"/></svg><svg class="di"><use href="#sq"/></svg><svg class="di"><use href="#hx"/></svg>
        <span class="dsep"></span>
        <svg class="di"><use href="#el"/></svg><svg class="di"><use href="#cn2"/></svg><svg class="di"><use href="#xc"/></svg><svg class="di"><use href="#hl"/></svg><span class="di-text di-xyz">XYZ=<svg class="xyz-wave"><use href="#wv"/></svg></span><svg class="di"><use href="#of2"/></svg><svg class="di"><use href="#cc"/></svg><svg class="di"><use href="#cc"/></svg><svg class="di"><use href="#cc"/></svg><svg class="di"><use href="#ts"/></svg><svg class="di"><use href="#fy"/></svg><svg class="di"><use href="#br"/></svg><svg class="di"><use href="#dg"/></svg><svg class="di"><use href="#yd"/></svg>
        <span class="more-row"><span class="more more-inline"></span><span class="chev">»</span></span>
      </div>
      <div class="dock d-6">
        <span class="dgrip"></span>
        <svg class="di"><use href="#f1"/></svg><svg class="di"><use href="#f2"/></svg><svg class="di"><use href="#f3"/></svg><svg class="di"><use href="#f4"/></svg><svg class="di"><use href="#f5"/></svg><svg class="di"><use href="#f6"/></svg>
        <span class="dsep"></span>
        <svg class="di"><use href="#s1"/></svg><svg class="di"><use href="#s2"/></svg><svg class="di"><use href="#s3"/></svg><svg class="di"><use href="#s4"/></svg><svg class="di"><use href="#s5"/></svg><svg class="di"><use href="#s6"/></svg><svg class="di"><use href="#cu"/></svg><svg class="di"><use href="#s7"/></svg>
        <span class="dsep"></span>
        <svg class="di"><use href="#s6"/></svg><svg class="di"><use href="#s9"/></svg><svg class="di"><use href="#s10"/></svg><svg class="di"><use href="#s11"/></svg>
        <span class="dsep"></span>
        <svg class="di"><use href="#s12"/></svg>
        <span class="dsep"></span>
        <svg class="di"><use href="#s13"/></svg>
        <span class="more"></span>
      </div>
    </aside>

    <section class="viewport">
      <svg class="model" viewBox="157 108 1174 582" preserveAspectRatio="none">
        <!-- brake disc -->
        <path d="M603 325 L668 311 C672 360 672 400 670 450 C668 500 650 560 633 597 C622 625 615 640 605 652 C590 645 580 620 575 580 C570 500 585 390 603 325Z" fill="url(#gface)" stroke="#5a0505"/>
        <path d="M668 311 L702 314 C705 350 704 390 702 423 C699 470 688 510 670 583 C660 610 648 640 635 655 L605 652 C615 640 622 625 633 597 C650 560 668 500 670 450 C672 400 672 360 668 311Z" fill="url(#grim)" stroke="#4a0404" stroke-width="1.500"/>
        <g fill="#6a0505" stroke="#4a0404" stroke-width="1.300">
          <path d="M673 314l18 2 2 13-18-2z"/><path d="M676 340l17 1 1 14-16-1z"/><path d="M677 368l17 1-1 15-16-3z"/>
          <path d="M677 399l17 2-1 15-17-3z"/><path d="M674 432l18 3-1 14-17-3z"/><path d="M671 467l18 2-3 15-16-3z"/>
        </g>
        <path d="M666 500l17 4-4 16-17-3z" fill="#6a0505" stroke="#4a0404" stroke-width="1.300"/>
        <path d="M667 503l13 3-15 11z" fill="#d81010"/>
        <g stroke="#640808" stroke-width="2.200" fill="#ee1212">
          <path d="M662 532l15 3-5 16-15-3z"/><path d="M656 562l14 2-5 14-14-2z"/><path d="M647 589l13 2-5 11-13-2z"/>
          <path d="M640 612l13 1-4 9-13-1z"/>
        </g>
        <g stroke="#640808" stroke-width="2.200" fill="#f07272"><path d="M632 631l12 1-3 7-13-1z"/><path d="M623 644l12 1-3 5-13-1z"/></g>
        <!-- hub -->
        <path d="M590 355 L630 363 C640 372 645 385 645 400 L645 487 L616 555 L570 549Z" fill="url(#ghub)" stroke="#4a0404"/>
        <ellipse cx="576" cy="453" rx="26" ry="98" fill="url(#gflange)" stroke="#5a0505" stroke-width="1.500" transform="rotate(4 576 453)"/>
        <ellipse cx="574" cy="456" rx="17" ry="70" fill="#d00a0a" stroke="#7a0606" stroke-width="1.200" transform="rotate(4 574 456)"/>
        <ellipse cx="574" cy="458" rx="12" ry="58" fill="#7c0404" stroke="#5a0505" transform="rotate(4 574 458)"/>
        <ellipse cx="576" cy="472" rx="8" ry="38" fill="#f41414" transform="rotate(4 576 472)"/>
        <g fill="#e8c0c0" stroke="#5a0505"><ellipse cx="589" cy="391" rx="2" ry="5"/><ellipse cx="563" cy="420" rx="2" ry="5"/><ellipse cx="555" cy="475" rx="2" ry="5"/><ellipse cx="560" cy="518" rx="2" ry="6"/><ellipse cx="586" cy="488" rx="2" ry="6"/></g>
        <!-- rear cylinder -->
        <path d="M757 267 L793 267 C803 275 809 295 809 313 C809 340 805 370 790 395 L777 398 L700 385 L750 300Z" fill="url(#grear)" stroke="#0b4f10" stroke-width="1.300"/>
        <path d="M793 267 C802 285 804 320 800 355 C798 375 793 390 786 396" fill="none" stroke="#0b4f10"/>
        <path d="M752 353 L787 357 C789 362 788 372 787 375 L750 370Z" fill="url(#gbump)" stroke="#0b4f10"/>
        <path d="M808 325 L826 325 C830 330 829 345 827 350 L808 345Z" fill="url(#gstem)" stroke="#0b4f10"/>
        <path d="M826 325 C830 330 829 345 827 350" fill="none" stroke="#083a0c" stroke-width="2"/>
        <path d="M765 230 L797 235 L790 273 C782 279 765 275 758 267Z" fill="url(#gtube)" stroke="#0b4f10" stroke-width="1.300"/>
        <ellipse cx="781" cy="234" rx="16" ry="6" fill="#e0eee0" stroke="#0b4f10" transform="rotate(8 781 234)"/>
        <ellipse cx="779" cy="234" rx="13" ry="5" fill="#3e3e3e" transform="rotate(8 779 234)"/>
        <!-- dark lower body -->
        <path d="M705 388 L720 370 L733 382 L747 385 L700 385Z" fill="#0e7a14"/>
        <!-- pads -->
        <path d="M635 307 L652 309 L655 352 L633 377 L629 353 L635 328Z" fill="#a97c08" stroke="#4a3800"/>
        <path d="M655 352 L669 352 L668 365 L647 385 L635 383 L633 377Z" fill="#6d5004" stroke="#4a3800"/>
        <path d="M652 309 L666 311 L669 352 L655 352Z" fill="#fbf200" stroke="#4a3800"/>
        <path d="M700 314 L714 316 L717 357 L704 354Z" fill="#fbf200" stroke="#4a3800"/>
        <path d="M704 354 L717 357 L708 376 L702 378Z" fill="#705206"/>
        <path d="M715 316 L727 317 L718 352 L710 320Z" fill="url(#gpad)"/>
        <path d="M727 317 L739 317 L733 383 L722 375 L705 388 C713 375 722 352 727 317Z" fill="#27a327" stroke="#0b4f10"/>
        <ellipse cx="729" cy="362" rx="2.500" ry="6" fill="#e6eee6" stroke="#0b4f10"/>
        <!-- caliper body -->
        <path d="M597 221 L738 235 C749 250 755 272 755 300 C755 332 752 360 747 385 L733 382 L739 322 L635 306 L630 342 L612 338 L606 313 C612 280 610 245 597 221Z" fill="url(#gbody)" stroke="#0b4f10" stroke-width="1.300"/>
        <path d="M606 330 L630 342 L626 365 C618 370 610 368 606 362 C602 355 602 342 606 330Z" fill="#2fbd2f" stroke="#0b4f10"/>
        <path d="M610 340 L630 342" stroke="#0b4f10"/>
        <path d="M604 313 L606 330 L612 338 L610 308Z" fill="#2fbd2f"/>
        <path d="M595 221 C580 228 574 245 570 265 L578 265 L593 293 L604 315 L609 310 C613 280 611 245 595 221Z" fill="#35c935" stroke="#0b4f10" stroke-width="1.300"/>
        <path d="M570 265 L578 265 L593 293 L588 305 L571 306 C568 302 567 297 568 293Z" fill="#27a827" stroke="#0b4f10" stroke-width="1.200"/>
        <path d="M578 268 L574 303 M584 279 L581 304" stroke="#0b4f10" fill="none"/>
        <path d="M635 230 L715 239 L720 254 L640 245Z" fill="#2dbd2d" stroke="#0b4f10" stroke-width="1.300"/>
        <path d="M640 239 L717 248 L720 254 L640 245Z" fill="#0e7e14"/>
        <!-- WCS -->
        <path d="M654 415 V460 L585 451 M654 460 L640 487" fill="none" stroke="#f4e4e4" stroke-width="1.200"/>
        <path d="M529 448 L577 444 C583 447 583 458 578 463Z" fill="none" stroke="#ea6a14" stroke-width="1.400"/>
        <path d="M577 444 C573 450 574 458 578 463" fill="none" stroke="#ea6a14"/>
        <text x="655" y="406" class="wcs">YC</text>
        <text x="596" y="456" class="wcs">XC</text>
        <text x="639" y="486" class="wcs">ZC</text>
      </svg>
    </section>

    <aside class="rail">
      <svg class="rt rt-1"><use href="#r1"/></svg>
      <svg class="rt rt-2"><use href="#r2"/></svg>
      <svg class="rt rt-3"><use href="#r3"/></svg>
      <svg class="rt"><use href="#r4"/></svg>
      <svg class="rt"><use href="#r5"/></svg>
      <svg class="rt rt-6"><use href="#r6"/></svg>
      <svg class="rt"><use href="#r7"/></svg>
    </aside>
  </main>

  <div class="bottomtools">
    <div class="tb t-h">
      <span class="grip"></span>
      <svg class="ti"><use href="#b1"/></svg><svg class="ti"><use href="#b3"/></svg><svg class="ti"><use href="#b4"/></svg><svg class="ti"><use href="#b5"/></svg><svg class="ti"><use href="#b6"/></svg><svg class="ti"><use href="#b7"/></svg>
      <span class="sep sep-n"></span>
      <svg class="ti"><use href="#b8"/></svg><svg class="ti"><use href="#b8"/></svg><svg class="ti"><use href="#b9"/></svg><svg class="ti"><use href="#b10"/></svg><svg class="ti"><use href="#b11"/></svg><svg class="ti"><use href="#b12"/></svg><svg class="ti"><use href="#b13"/></svg><svg class="ti"><use href="#b14"/></svg><svg class="ti"><use href="#b15"/></svg>
      <span class="combo combo-3"><span class="combo-text"></span><span class="combo-arrow combo-arrow-off"></span></span>
      <span class="sep sep-c"></span>
      <svg class="ti"><use href="#b16"/></svg>
      <span class="sep sep-d"></span>
      <svg class="ti"><use href="#b17"/></svg><svg class="ti"><use href="#b18"/></svg>
      <span class="sep"></span>
      <svg class="ti"><use href="#b19"/></svg><span class="drop"></span>
    </div>
  </div>

  <footer class="statusbar">
    <span class="status-text">Part file saved</span>
    <span class="status-cell status-cell-a"></span>
    <span class="status-cell status-cell-b"></span>
  </footer>

  <div class="taskbar">
    <div class="start"><svg class="start-flag"><use href="#flag"/></svg><span class="start-text">пуск</span></div>
    <div class="quick">
      <svg class="qi"><use href="#gold"/></svg><svg class="qi"><use href="#mp"/></svg><svg class="qi"><use href="#ie"/></svg><svg class="qi"><use href="#q4"/></svg><svg class="qi"><use href="#q5"/></svg><svg class="qi"><use href="#q6"/></svg><svg class="qi"><use href="#ops"/></svg>
    </div>
    <span class="quick-more">»</span>
    <div class="task task-idle"><svg class="task-icon"><use href="#gold"/></svg><span>193. 18 Gala - Freed ...</span></div>
    <div class="task task-active"><svg class="task-icon"><use href="#nx"/></svg><span>NX 3 - Modeling - [VW...</span></div>
    <span class="lang">EN</span>
    <div class="tray">
      <svg class="tr-i"><use href="#ati"/></svg><svg class="tr-i"><use href="#mail"/></svg><svg class="tr-i"><use href="#sm"/></svg><svg class="tr-i"><use href="#fe"/></svg><svg class="tr-i"><use href="#gs"/></svg><svg class="tr-i"><use href="#gd"/></svg><svg class="tr-i"><use href="#av"/></svg><svg class="tr-i"><use href="#sp2"/></svg>
      <span class="clock">16:59</span>
    </div>
  </div>
</div>
</body>
</html>
```
FILE: styles.css
```css
* { box-sizing: border-box; }
html, body { margin: 0; padding: 0; }
body { width: 1366px; height: 768px; overflow: hidden; background: #ece9d8; font-family: "Liberation Sans", "Noto Sans", sans-serif; font-size: 11px; color: #111; }
.defs { display: block; width: 0; height: 0; overflow: hidden; }
.q { font: bold 12px "Liberation Sans", sans-serif; fill: #1a1aa0; text-anchor: middle; }
.window { display: flex; flex-direction: column; width: 1366px; height: 768px; }

/* title bar */
.titlebar { flex: 0 0 26px; display: flex; align-items: center; padding: 0 3px 0 2px; color: #fff;
  background: linear-gradient(#0a4fd0 0, #3a90f8 2px, #0a62e8 5px, #0056e4 12px, #0058e8 20px, #0048cc 24px, #003aa8 26px); }
.title-logo { width: 18px; height: 18px; margin-right: 2px; }
.title-text { font: 600 13px "Noto Sans", sans-serif; text-shadow: 1px 1px 0 #0a2a90; }
.win-btns { margin-left: auto; display: flex; gap: 2px; }
.wb { width: 21px; height: 21px; border: 1px solid #e8f0ff; border-radius: 3px; background: linear-gradient(135deg, #6a9cf0, #1c50d0 60%, #2a60d8); display: flex; align-items: center; justify-content: center; color: #fff; }
.wb-close { background: linear-gradient(135deg, #f0a088, #d84a20 55%, #c03810); font-size: 14px; font-weight: 700; font-family: "DejaVu Sans", sans-serif; }
.wb-min { width: 7px; height: 3px; background: #fff; margin: 9px 6px 0 0; }
.wb-res { width: 10px; height: 10px; border: 1px solid #fff; border-top-width: 2px; box-shadow: 2px -2px 0 -1px #fff; }

/* menu */
.menubar { flex: 0 0 25px; display: flex; align-items: center; padding: 0 0 2px 6px; border-bottom: 1px solid #aca899; box-shadow: inset 0 1px 0 #f6f4ea; }
.menu-logo { width: 18px; height: 18px; margin-right: 6px; }
.menus { display: flex; font-size: 11.4px; }
.m { display: block; white-space: nowrap; color: #111; }
.m1 { width: 28px; } .m2 { width: 32px; } .m3 { width: 34px; } .m4 { width: 42px; } .m5 { width: 47px; }
.m6 { width: 39px; } .m7 { width: 64px; letter-spacing: -.8px; } .m8 { width: 69px; } .m9 { width: 52px; } .m10 { width: 71px; letter-spacing: -.3px; }
.m11 { width: 65px; letter-spacing: -.3px; } .m12 { width: 52px; letter-spacing: -.2px; }
.mdi-btns { margin-left: auto; display: flex; padding-right: 4px; gap: 1px; }
.mdi { width: 16px; height: 16px; display: flex; align-items: center; justify-content: center; background: #f4f3ea; color: #444; font-size: 11px; font-weight: 700; font-family: "DejaVu Sans", sans-serif; }
.mdi-min { width: 6px; height: 2px; background: #444; margin-top: 6px; }
.mdi-res { width: 8px; height: 8px; border: 1px solid #444; border-top-width: 2px; box-shadow: 2px -2px 0 -1px #444; }

/* tool rows */
.toolrow { flex: 0 0 26px; display: flex; align-items: stretch; }
.toolrow-2 { flex: 0 0 27px; margin-bottom: 2px; }
.tb { display: flex; align-items: center; height: 100%; padding: 0 0 0 4px; border-right: 1px solid #b8b5a4; border-bottom: 1px solid #b8b5a4; background: #ece9d8; }
.t-a { width: 311px; padding-left: 5px; }
.t-b { width: 387px; margin-left: 32px; padding-left: 5px; }
.t-c { width: 66px; margin-left: 20px; }
.t-d { width: 189px; }
.t-e { width: 147px; }
.t-f { width: 261px; padding-left: 6px; }
.t-g { width: 184px; padding-left: 6px; }
.grip { width: 2px; height: 18px; margin-right: 1px; flex: none; background: repeating-linear-gradient(#97947f 0 2px, transparent 2px 4px); }
.ti { width: 23px; height: 20px; flex: none; padding: 0 2px; filter: blur(.3px); }
.ti-on { height: 24px; background: #fbc88a; border: 1px solid #8a6e50; border-radius: 2px; padding: 1px; filter: none; }
.ti-soft { height: 24px; background: #f6f4ee; padding: 2px; }
.sep { width: 1px; height: 22px; margin: 0 3px; background: #b8b5a4; box-shadow: 1px 0 0 #fff; flex: none; }
.sep-n { margin: 0 2px; }
.sep-c { margin: 0 0 0 8px; }
.sep-d { margin: 0 1px 0 3px; }
.drop { width: 0; height: 0; border: 3px solid transparent; border-top: 4px solid #111; border-bottom: 0; margin: 5px 4px 0 2px; flex: none; }
.combo { display: flex; align-items: center; height: 18px; border: 1px solid #8d9cc0; background: #fff; flex: none; font-size: 11.4px; }
.combo-1 { width: 43px; margin: 0 4px 0 6px; }
.combo-2 { width: 87px; margin: 0 3px 0 3px; }
.combo-3 { width: 99px; margin: 0 0 0 5px; background: #ece9d8; border-color: #b9b8a8; }
.combo-text { flex: 1; padding-left: 5px; }
.combo-arrow { width: 16px; height: 16px; flex: none; background: linear-gradient(#dfe8fa, #b0c4ee); display: flex; align-items: center; justify-content: center; }
.combo-arrow::after { content: ""; width: 6px; height: 6px; border-right: 2px solid #2a4a90; border-bottom: 2px solid #2a4a90; transform: rotate(45deg) translate(-1px, -1px); }
.combo-arrow-off { background: #ece9d8; }
.combo-arrow-off::after { border-color: #aaa; }

/* work area */
.workarea { flex: 1 1 auto; display: flex; min-height: 0; }
.docks { flex: 0 0 157px; display: flex; align-items: flex-start; padding-top: 2px; }
.dock { width: 26px; flex: none; display: flex; flex-direction: column; align-items: center; background: #ece9d8; border-right: 1px solid #aca899; border-bottom: 1px solid #aca899; box-shadow: inset 1px 0 0 #f7f5ec; }
.d-1 { height: 549px; } .d-2 { height: 456px; } .d-3 { height: 474px; } .d-4 { height: 226px; } .d-5 { height: 582px; } .d-6 { height: 504px; }
.dgrip { width: 14px; height: 2px; margin: 2px 0 .5px; flex: none; background: repeating-linear-gradient(90deg, #97947f 0 2px, transparent 2px 4px); }
.d-1 .dgrip { margin-bottom: 1.5px; }
.d-6 .dgrip { margin-bottom: 2.5px; }
.di { width: 20px; height: 23.05px; padding: 1.5px 0; flex: none; filter: blur(.3px); }
.dsep { width: 22px; height: 1px; margin: 2.35px 0; background: #aca899; box-shadow: 0 1px 0 #fff; flex: none; }
.di-text { flex: none; height: 23.05px; display: flex; align-items: center; justify-content: center; }
.di-a { font: bold 16px "Liberation Serif", serif; color: #111; }
.di-xyz { font: bold 8px/8px "Liberation Sans", sans-serif; color: #c01818; flex-direction: column; letter-spacing: -.3px; }
.xyz-wave { display: block; width: 18px; height: 10px; flex: none; }
.more { width: 0; height: 0; margin: 3px 14px 0 0; border: 3px solid transparent; border-right: 4px solid #111; border-left: 0; flex: none; }
.more-row { display: flex; align-items: center; gap: 5px; height: 16px; margin-top: 1px; }
.more-inline { margin: 0; }
.chev { font: bold 12px/10px "DejaVu Sans", sans-serif; transform: rotate(90deg); color: #111; }

.viewport { flex: 1 1 auto; border-top: 2px solid #33352e; border-left: 1px solid #55564c; background: linear-gradient(#97bcdc 0, #b6cfe2 35%, #d8e0e5 65%, #e6e6e6 100%); min-width: 0; }
.model { display: block; width: 100%; height: 100%; }
.wcs { font: 12px "DejaVu Sans", sans-serif; fill: #f8eeee; }
.rail { flex: 0 0 35px; display: flex; flex-direction: column; align-items: center; padding: 12px 5px 0 5px; margin-top: 2px; background: linear-gradient(90deg, #ece9d8 0 5px, #a9a89b 5px); border-left: 1px solid #8f8e80; }
.rt { width: 25px; height: 34px; flex: none; padding: 7px 2px; background: #ece9d8; border-bottom: 1px solid #c6c3b2; filter: none; }
.rt-1 { height: 37px; padding: 8px 2px; }
.rt-2 { background: #f1eee0; }
.rt-3, .rt-6 { margin-top: 11px; }

/* bottom */
.bottomtools { flex: 0 0 30px; display: flex; border-top: 1px solid #fff; }
.t-h { width: 590px; border-bottom: 2px solid #b0ad9c; }
.statusbar { flex: 0 0 18px; display: flex; align-items: center; border-top: 1px solid #aca899; }
.status-text { margin-left: 759px; width: 504px; font-size: 11.4px; }
.status-cell { display: block; height: 100%; border-left: 1px solid #c2bfae; box-shadow: -1px 0 0 #fff; }
.status-cell-a { width: 86px; }
.status-cell-b { width: 17px; }

.taskbar { flex: 0 0 30px; display: flex; align-items: center; color: #fff; background: linear-gradient(#1e5ecc 0, #2c74e8 2px, #2468dc 6px, #2262d6 22px, #1a50b8 30px); }
.start { width: 96px; height: 100%; display: flex; align-items: center; gap: 5px; padding-left: 8px; border-radius: 0 8px 8px 0; background: linear-gradient(#3a8a3a 0, #4ca84c 3px, #3c9a3c 8px, #349034 24px, #2a7a2a 30px); }
.start-flag { width: 20px; height: 20px; }
.start-text { font: italic 700 18px "Liberation Sans", sans-serif; text-shadow: 1px 1px 1px #1a4a1a; }
.quick { margin-left: 9px; display: flex; gap: 3px; }
.qi { width: 20px; height: 20px; flex: none; }
.quick-more { margin-left: 27px; width: 12px; color: #a8c8f8; font: 12px "DejaVu Sans", sans-serif; align-self: flex-start; margin-top: 6px; }
.task { height: 26px; display: flex; align-items: center; gap: 4px; padding-left: 8px; font-size: 11px; letter-spacing: -.1px; border-radius: 2px; white-space: nowrap; }
.task-icon { width: 17px; height: 17px; flex: none; }
.task-idle { width: 156px; margin-left: 4px; background: linear-gradient(#4a90f4, #3c80ec 80%, #3474e0); }
.task-active { width: 160px; margin-left: 2px; padding-left: 10px; gap: 3px; background: #1e52b4; box-shadow: inset 1px 1px 1px #123a88; }
.lang { margin-left: auto; margin-right: 22px; font-size: 11.4px; color: #e8f0ff; }
.tray { width: 200px; height: 100%; display: flex; align-items: center; gap: 1px; padding-left: 9px; border-left: 1px solid #0d2f80; background: linear-gradient(#0a7ee0 0, #14a0f0 2px, #1090e8 6px, #0c88e0 24px, #0a70cc 30px); }
.tr-i { width: 17px; height: 17px; flex: none; }
.clock { margin-left: 11px; font-size: 11.4px; }
```
